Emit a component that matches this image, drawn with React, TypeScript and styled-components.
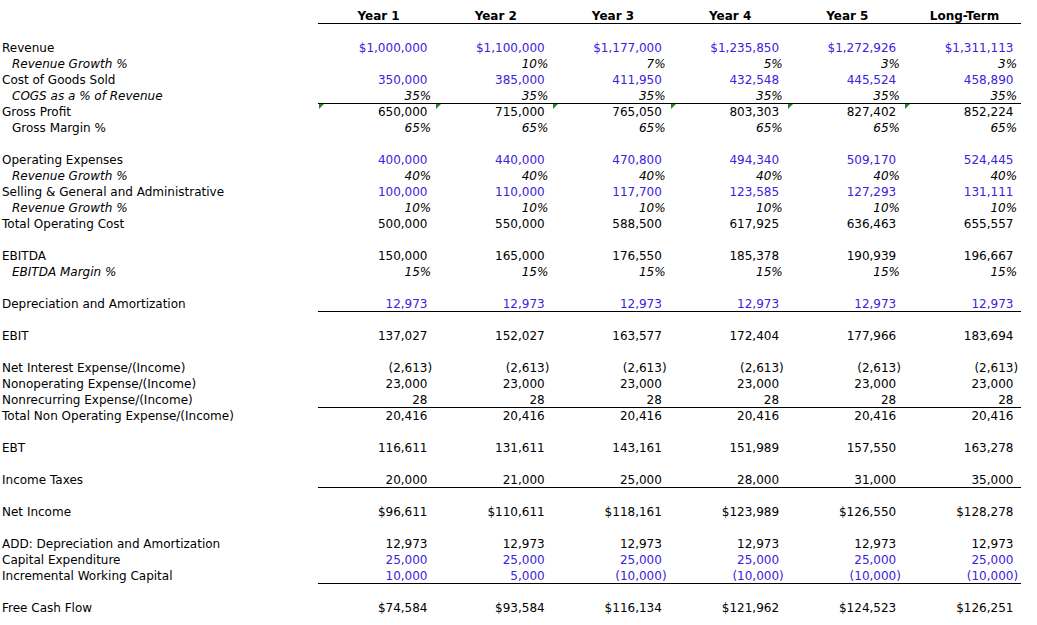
import React from 'react';
import styled, { createGlobalStyle } from 'styled-components';

const GlobalStyle = createGlobalStyle`
  html, body {
    margin: 0;
    padding: 0;
    background: #fff;
  }
  body {
    font-family: "DejaVu Sans", Verdana, sans-serif;
    font-size: 12px;
    color: #000;
  }
`;

type Cell = string | null;

type RowData = {
  label?: string;
  kind?: 'plain' | 'sub' | 'indent';
  values?: Cell[];
  blue?: boolean;
  pct?: boolean;
  underline?: boolean;
  marks?: boolean;
};

const YEARS = ['Year 1', 'Year 2', 'Year 3', 'Year 4', 'Year 5', 'Long-Term'];

const rows: RowData[] = [
  {},
  {
    label: 'Revenue',
    blue: true,
    values: ['$1,000,000', '$1,100,000', '$1,177,000', '$1,235,850', '$1,272,926', '$1,311,113']
  },
  {
    label: 'Revenue Growth %',
    kind: 'sub',
    pct: true,
    values: [null, '10%', '7%', '5%', '3%', '3%']
  },
  {
    label: 'Cost of Goods Sold',
    blue: true,
    values: ['350,000', '385,000', '411,950', '432,548', '445,524', '458,890']
  },
  {
    label: 'COGS as a % of Revenue',
    kind: 'sub',
    pct: true,
    underline: true,
    values: ['35%', '35%', '35%', '35%', '35%', '35%']
  },
  {
    label: 'Gross Profit',
    marks: true,
    values: ['650,000', '715,000', '765,050', '803,303', '827,402', '852,224']
  },
  {
    label: 'Gross Margin %',
    kind: 'indent',
    pct: true,
    values: ['65%', '65%', '65%', '65%', '65%', '65%']
  },
  {},
  {
    label: 'Operating Expenses',
    blue: true,
    values: ['400,000', '440,000', '470,800', '494,340', '509,170', '524,445']
  },
  {
    label: 'Revenue Growth %',
    kind: 'sub',
    pct: true,
    values: ['40%', '40%', '40%', '40%', '40%', '40%']
  },
  {
    label: 'Selling & General and Administrative',
    blue: true,
    values: ['100,000', '110,000', '117,700', '123,585', '127,293', '131,111']
  },
  {
    label: 'Revenue Growth %',
    kind: 'sub',
    pct: true,
    values: ['10%', '10%', '10%', '10%', '10%', '10%']
  },
  {
    label: 'Total Operating Cost',
    values: ['500,000', '550,000', '588,500', '617,925', '636,463', '655,557']
  },
  {},
  {
    label: 'EBITDA',
    values: ['150,000', '165,000', '176,550', '185,378', '190,939', '196,667']
  },
  {
    label: 'EBITDA Margin %',
    kind: 'sub',
    pct: true,
    values: ['15%', '15%', '15%', '15%', '15%', '15%']
  },
  {},
  {
    label: 'Depreciation and Amortization',
    blue: true,
    underline: true,
    values: ['12,973', '12,973', '12,973', '12,973', '12,973', '12,973']
  },
  {},
  {
    label: 'EBIT',
    values: ['137,027', '152,027', '163,577', '172,404', '177,966', '183,694']
  },
  {},
  {
    label: 'Net Interest Expense/(Income)',
    values: ['(2,613)', '(2,613)', '(2,613)', '(2,613)', '(2,613)', '(2,613)']
  },
  {
    label: 'Nonoperating Expense/(Income)',
    values: ['23,000', '23,000', '23,000', '23,000', '23,000', '23,000']
  },
  {
    label: 'Nonrecurring Expense/(Income)',
    underline: true,
    values: ['28', '28', '28', '28', '28', '28']
  },
  {
    label: 'Total Non Operating Expense/(Income)',
    values: ['20,416', '20,416', '20,416', '20,416', '20,416', '20,416']
  },
  {},
  {
    label: 'EBT',
    values: ['116,611', '131,611', '143,161', '151,989', '157,550', '163,278']
  },
  {},
  {
    label: 'Income Taxes',
    underline: true,
    values: ['20,000', '21,000', '25,000', '28,000', '31,000', '35,000']
  },
  {},
  {
    label: 'Net Income',
    values: ['$96,611', '$110,611', '$118,161', '$123,989', '$126,550', '$128,278']
  },
  {},
  {
    label: 'ADD: Depreciation and Amortization',
    values: ['12,973', '12,973', '12,973', '12,973', '12,973', '12,973']
  },
  {
    label: 'Capital Expenditure',
    blue: true,
    values: ['25,000', '25,000', '25,000', '25,000', '25,000', '25,000']
  },
  {
    label: 'Incremental Working Capital',
    blue: true,
    underline: true,
    values: ['10,000', '5,000', '(10,000)', '(10,000)', '(10,000)', '(10,000)']
  },
  {},
  {
    label: 'Free Cash Flow',
    values: ['$74,584', '$93,584', '$116,134', '$121,962', '$124,523', '$126,251']
  }
];

const Sheet = styled.div`
  padding-top: 8px;
  width: 1037px;
`;

const Row = styled.div`
  display: grid;
  grid-template-columns: 318px repeat(6, 117.2px);
  height: 16px;
  line-height: 16px;
  white-space: nowrap;
`;

const Label = styled.div<{ $kind: 'plain' | 'sub' | 'indent' }>`
  padding-left: ${(p) => (p.$kind === 'plain' ? '2px' : '12px')};
  font-style: ${(p) => (p.$kind === 'sub' ? 'italic' : 'normal')};
`;

const HeadCell = styled.div`
  box-sizing: border-box;
  height: 16px;
  border-bottom: 1px solid #000;
  text-align: center;
  font-weight: bold;
  padding-left: 4px;
`;

const ValueCell = styled.div<{
  $blue: boolean;
  $pct: boolean;
  $line: boolean;
  $mark: boolean;
}>`
  position: relative;
  box-sizing: border-box;
  height: 16px;
  text-align: right;
  padding-right: ${(p) => (p.$pct ? '4px' : '3px')};
  color: ${(p) => (p.$blue ? '#3b22dc' : '#000')};
  font-style: ${(p) => (p.$pct ? 'italic' : 'normal')};
  border-bottom: ${(p) => (p.$line ? '1px solid #000' : 'none')};

  ${(p) =>
    p.$mark &&
    `
    &::before {
      content: '';
      position: absolute;
      left: 1px;
      top: 0;
      width: 0;
      height: 0;
      border-top: 5px solid #1f8a1f;
      border-right: 5px solid transparent;
    }
  `}
`;

const Paren = styled.span<{ $hidden: boolean }>`
  visibility: ${(p) => (p.$hidden ? 'hidden' : 'visible')};
`;

const Amount: React.FC<{ text: string }> = ({ text }) => {
  const neg = text.startsWith('(');
  const body = neg ? text.slice(0, -1) : text;
  return (
    <>
      {body}
      <Paren $hidden={!neg}>)</Paren>
    </>
  );
};

export default function App() {
  return (
    <>
      <GlobalStyle />
      <Sheet>
        <Row>
          <Label $kind="plain" />
          {YEARS.map((y) => (
            <HeadCell key={y}>{y}</HeadCell>
          ))}
        </Row>
        {rows.map((r, i) => (
          <Row key={i}>
            <Label $kind={r.kind ?? 'plain'}>{r.label}</Label>
            {(r.values ?? [null, null, null, null, null, null]).map((v, j) => (
              <ValueCell
                key={j}
                $blue={!!r.blue}
                $pct={!!r.pct}
                $line={!!r.underline}
                $mark={!!r.marks}
              >
                {v && (r.pct ? v : <Amount text={v} />)}
              </ValueCell>
            ))}
          </Row>
        ))}
      </Sheet>
    </>
  );
}
